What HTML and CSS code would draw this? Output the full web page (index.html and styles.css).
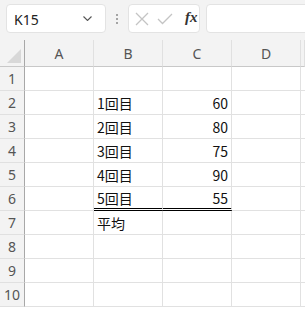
FILE: index.html
```html
<!DOCTYPE html>
<html lang="ja">
<head>
    <meta charset="UTF-8">
    <meta name="viewport" content="width=device-width, initial-scale=1.0">
    <title>Sheet1</title>
    <link rel="stylesheet" href="styles.css">
</head>
<body>
    <div id="toolbar">
        <div class="name-box">
            <span>K15</span>
            <svg class="chevron" width="9" height="5" viewBox="0 0 9 5"><path d="M0.5 0.5 L4.5 4.5 L8.5 0.5" fill="none" stroke="#555" stroke-width="1.1"/></svg>
        </div>
        <div class="dots"><i></i><i></i><i></i></div>
        <div class="fx-box">
            <svg width="14" height="14" viewBox="0 0 14 14"><path d="M1 1 L13 13 M13 1 L1 13" stroke="#c4c4c4" stroke-width="1.3"/></svg>
            <svg width="16" height="12" viewBox="0 0 16 12"><path d="M1 6 L5.5 10.5 L15 1" fill="none" stroke="#c4c4c4" stroke-width="1.3"/></svg>
            <span class="fx">fx</span>
        </div>
        <div class="formula-input"></div>
    </div>

    <div id="sheet">
        <div class="corner"></div>
        <div class="col-head">A</div>
        <div class="col-head">B</div>
        <div class="col-head">C</div>
        <div class="col-head">D</div>
        <div class="col-head"></div>
        <!-- Rows will be added by script -->
    </div>

    <script>
        const data = {
            2: ['1回目', 60],
            3: ['2回目', 80],
            4: ['3回目', 75],
            5: ['4回目', 90],
            6: ['5回目', 55],
            7: ['平均', '']
        };

        const sheet = document.getElementById('sheet');
        for (let r = 1; r <= 10; r++) {
            const head = document.createElement('div');
            head.className = 'row-head';
            head.textContent = r;
            sheet.appendChild(head);

            const row = data[r] || ['', ''];
            for (let c = 0; c < 5; c++) {
                const cell = document.createElement('div');
                cell.className = 'cell';
                if (c === 1) cell.textContent = row[0];
                if (c === 2) {
                    cell.textContent = row[1];
                    cell.classList.add('num');
                }
                if (r === 6 && (c === 1 || c === 2)) cell.classList.add('total-line');
                sheet.appendChild(cell);
            }
        }
    </script>
</body>
</html>
```

FILE: styles.css
```css
body {
    margin: 0;
    padding: 0;
    background-color: #ffffff;
    font-family: "Noto Sans", "Noto Sans CJK JP", sans-serif;
    overflow: hidden;
    width: 305px;
    height: 309px;
}

#toolbar {
    height: 40px;
    box-sizing: border-box;
    padding: 4px 0 0 6px;
    display: flex;
    align-items: flex-start;
    background-color: #f3f3f3;
    overflow: hidden;
}

#toolbar > * {
    flex-shrink: 0;
}

.name-box {
    width: 100px;
    height: 29px;
    box-sizing: border-box;
    border: 1px solid #e3e3e3;
    border-radius: 4px;
    background-color: #ffffff;
    display: flex;
    align-items: center;
    justify-content: space-between;
    padding: 0 13px 0 7px;
    font-size: 14px;
    color: #222;
}

.name-box span {
    margin-top: 1px;
}

.dots {
    width: 22px;
    height: 29px;
    display: flex;
    flex-direction: column;
    align-items: center;
    justify-content: center;
    gap: 2px;
}

.dots i {
    width: 2px;
    height: 2px;
    background-color: #8a8a8a;
    border-radius: 50%;
}

.fx-box {
    width: 72px;
    height: 29px;
    box-sizing: border-box;
    border: 1px solid #e3e3e3;
    border-radius: 4px;
    background-color: #ffffff;
    display: flex;
    align-items: center;
    padding-left: 6px;
    gap: 8px;
}

.fx {
    font-family: "Liberation Serif", serif;
    font-style: italic;
    font-weight: bold;
    font-size: 15px;
    color: #333;
    margin-left: 4px;
    margin-top: -2px;
}

.formula-input {
    margin-left: 6px;
    width: 120px;
    height: 29px;
    box-sizing: border-box;
    border: 1px solid #e3e3e3;
    border-radius: 4px;
    background-color: #ffffff;
}

#sheet {
    display: grid;
    grid-template-columns: 25px 69px 69px 69px 69px 4px;
    grid-template-rows: 27px;
    grid-auto-rows: 24px;
}

.corner {
    background-color: #f3f3f3;
    border-right: 1px solid #a8a8a8;
    border-bottom: 1px solid #c8c8c8;
    position: relative;
}

.corner::after {
    content: "";
    position: absolute;
    right: 3px;
    bottom: 3px;
    border-left: 14px solid transparent;
    border-bottom: 14px solid #d8d8d8;
}

.col-head {
    background-color: #f3f3f3;
    border-right: 1px solid #e0e0e0;
    border-bottom: 1px solid #c8c8c8;
    color: #555;
    font-size: 14px;
    display: flex;
    align-items: center;
    justify-content: center;
    box-sizing: border-box;
}

.row-head {
    background-color: #f3f3f3;
    border-right: 1px solid #a8a8a8;
    border-bottom: 1px solid #e0e0e0;
    color: #555;
    font-size: 14px;
    display: flex;
    align-items: center;
    justify-content: center;
    box-sizing: border-box;
}

.cell {
    border-right: 1px solid #e1e1e1;
    border-bottom: 1px solid #e1e1e1;
    box-sizing: border-box;
    font-family: "Noto Sans CJK JP", sans-serif;
    font-size: 14px;
    color: #111;
    display: flex;
    align-items: center;
    padding: 0 3px;
    white-space: nowrap;
}

.num {
    justify-content: flex-end;
}

.total-line {
    border-bottom: 3px double #000;
}
```
